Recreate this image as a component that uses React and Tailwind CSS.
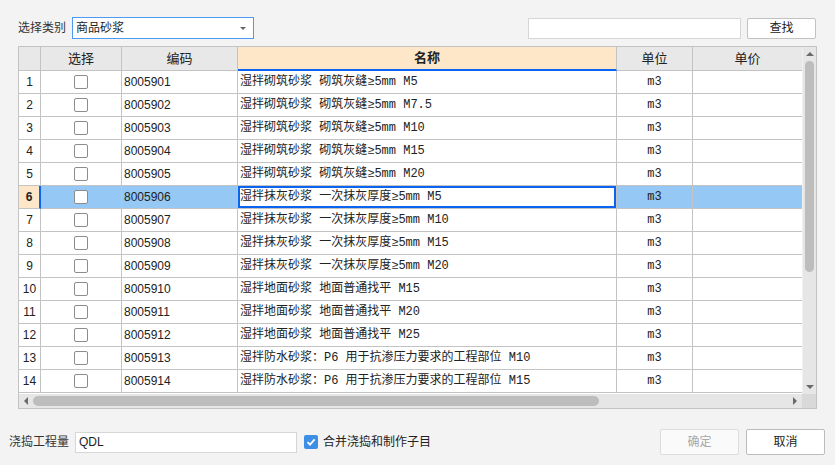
import React from "react";

const rows = [
  ["8005901", "湿拌砌筑砂浆 砌筑灰缝≥5mm M5"],
  ["8005902", "湿拌砌筑砂浆 砌筑灰缝≥5mm M7.5"],
  ["8005903", "湿拌砌筑砂浆 砌筑灰缝≥5mm M10"],
  ["8005904", "湿拌砌筑砂浆 砌筑灰缝≥5mm M15"],
  ["8005905", "湿拌砌筑砂浆 砌筑灰缝≥5mm M20"],
  ["8005906", "湿拌抹灰砂浆 一次抹灰厚度≥5mm M5"],
  ["8005907", "湿拌抹灰砂浆 一次抹灰厚度≥5mm M10"],
  ["8005908", "湿拌抹灰砂浆 一次抹灰厚度≥5mm M15"],
  ["8005909", "湿拌抹灰砂浆 一次抹灰厚度≥5mm M20"],
  ["8005910", "湿拌地面砂浆 地面普通找平 M15"],
  ["8005911", "湿拌地面砂浆 地面普通找平 M20"],
  ["8005912", "湿拌地面砂浆 地面普通找平 M25"],
  ["8005913", "湿拌防水砂浆：P6 用于抗渗压力要求的工程部位 M10"],
  ["8005914", "湿拌防水砂浆：P6 用于抗渗压力要求的工程部位 M15"],
];

const cols = "grid grid-cols-[22px_81px_116px_379px_76px_110px]";
const sans = "font-['Liberation_Sans','Noto_Sans_CJK_SC',sans-serif]";
const mono = "font-['Liberation_Mono','Noto_Sans_CJK_SC',monospace]";

const Check = () => (
  <div className="w-[14px] h-[14px] rounded-[2px] border border-[#8c8c8c] bg-white" />
);

const App = () => {
  return (
    <div className={`w-[835px] h-[465px] bg-[#f3f3f3] text-[#222] text-[12px] overflow-hidden pt-[17px] ${sans}`}>
      {/* top bar */}
      <div className="flex items-center h-[22px] pl-[18px]">
        <span className="w-[54px] text-[#333]">选择类别</span>
        <div className="w-[182px] h-[22px] border border-[#4b9bf5] bg-white flex items-center pl-[3px] pr-[7px]">
          <span className="flex-1">商品砂浆</span>
          <span className="w-0 h-0 border-l-[3px] border-r-[3px] border-t-[3px] border-l-transparent border-r-transparent border-t-[#666]" />
        </div>
        <div className="ml-[274px] w-[213px] h-[21px] border border-[#d6d6d6] bg-white" />
        <button className="ml-[6px] w-[69px] h-[21px] border border-[#c2c2c2] rounded-[2px] bg-white text-[12px]">
          查找
        </button>
      </div>

      {/* table */}
      <div className="ml-[18px] mt-[7px] w-[799px] h-[363px] border border-[#c3c3c3] bg-white flex flex-col">
        <div className="flex flex-1 min-h-0">
          <div className="w-[783px] overflow-hidden">
            {/* header */}
            <div className={`${cols} h-[24px] bg-[#e8e8e8] w-[784px]`}>
              <div className="border-r border-b border-[#c3c3c3]" />
              <div className="border-r border-b border-[#c3c3c3] flex items-center justify-center text-[13px]">选择</div>
              <div className="border-r border-b border-[#c3c3c3] flex items-center justify-center text-[13px]">编码</div>
              <div className="border-r border-b-2 border-[#c3c3c3] border-b-[#0a64f0] bg-[#fde7c8] flex items-center justify-center text-[13px] font-bold">名称</div>
              <div className="border-r border-b border-[#c3c3c3] flex items-center justify-center text-[13px]">单位</div>
              <div className="border-r border-b border-[#c3c3c3] flex items-center justify-center text-[13px]">单价</div>
            </div>
            {rows.map(([code, name], i) => {
              const sel = i === 5;
              return (
                <div key={code} className={`${cols} h-[23px] w-[784px] ${sel ? "bg-[#95c8f4]" : ""}`}>
                  <div
                    className={`border-b border-[#c3c3c3] flex items-center justify-center ${
                      sel ? "bg-[#fde7c8] font-bold border-r-2 border-r-[#0a64f0]" : "bg-white border-r"
                    }`}
                  >
                    {i + 1}
                  </div>
                  <div className="border-r border-b border-[#c3c3c3] flex items-center justify-center">
                    <Check />
                  </div>
                  <div className="border-r border-b border-[#c3c3c3] flex items-center pl-[2px] text-[12px]">{code}</div>
                  <div
                    className={`border-r border-b border-[#c3c3c3] flex items-center pl-[2px] whitespace-nowrap overflow-hidden ${mono} ${
                      sel ? "bg-white shadow-[inset_0_0_0_2px_#0a64f0]" : ""
                    }`}
                  >
                    {name}
                  </div>
                  <div className={`border-r border-b border-[#c3c3c3] flex items-center justify-center ${mono}`}>m3</div>
                  <div className="border-r border-b border-[#c3c3c3]" />
                </div>
              );
            })}
          </div>
          {/* vertical scrollbar */}
          <div className="w-[14px] bg-[#e6e6e6] border-l border-[#f0f0f0] flex flex-col items-center">
            <div className="h-[14px] flex items-center justify-center">
              <span className="w-0 h-0 border-l-[4px] border-r-[4px] border-b-[4px] border-l-transparent border-r-transparent border-b-[#6a6a6a]" />
            </div>
            <div className="flex-1 w-full px-[2px]">
              <div className="h-[211px] rounded-full bg-[#bdbdbd]" />
            </div>
            <div className="h-[14px] flex items-center justify-center">
              <span className="w-0 h-0 border-l-[4px] border-r-[4px] border-t-[4px] border-l-transparent border-r-transparent border-t-[#6a6a6a]" />
            </div>
          </div>
        </div>
        {/* horizontal scrollbar */}
        <div className="flex h-[14px]">
          <div className="w-[783px] bg-[#e6e6e6] flex items-center">
            <div className="w-[14px] flex items-center justify-center">
              <span className="w-0 h-0 border-t-[4px] border-b-[4px] border-r-[4px] border-t-transparent border-b-transparent border-r-[#6a6a6a]" />
            </div>
            <div className="flex-1 h-full py-[2px]">
              <div className="w-[566px] h-full rounded-full bg-[#bdbdbd]" />
            </div>
            <div className="w-[14px] flex items-center justify-center">
              <span className="w-0 h-0 border-t-[4px] border-b-[4px] border-l-[4px] border-t-transparent border-b-transparent border-l-[#6a6a6a]" />
            </div>
          </div>
          <div className="w-[14px] bg-[#d9d9d9]" />
        </div>
      </div>

      {/* bottom bar */}
      <div className="flex items-center h-[26px] mt-[20px] pl-[9px]">
        <span className="w-[66px] text-[#333]">浇捣工程量</span>
        <div className="w-[222px] h-[21px] border border-[#d6d6d6] bg-white flex items-center pl-[3px] text-[12px]">QDL</div>
        <div className="ml-[7px] w-[14px] h-[14px] rounded-[2px] bg-[#3d8fe6] flex items-center justify-center">
          <svg width="10" height="10" viewBox="0 0 10 10">
            <path d="M1.5 5.2 L4 7.6 L8.6 2.4" fill="none" stroke="white" strokeWidth="1.8" />
          </svg>
        </div>
        <span className="ml-[5px] w-[337px]">合并浇捣和制作子目</span>
        <button className="w-[79px] h-[26px] border border-[#dcdcdc] rounded-[2px] bg-[#fafafa] text-[#a8a8a8] text-[12px]">
          确定
        </button>
        <button className="ml-[7px] w-[79px] h-[26px] border border-[#bcbcbc] rounded-[2px] bg-white text-[12px]">
          取消
        </button>
      </div>
    </div>
  );
};

export default App;
